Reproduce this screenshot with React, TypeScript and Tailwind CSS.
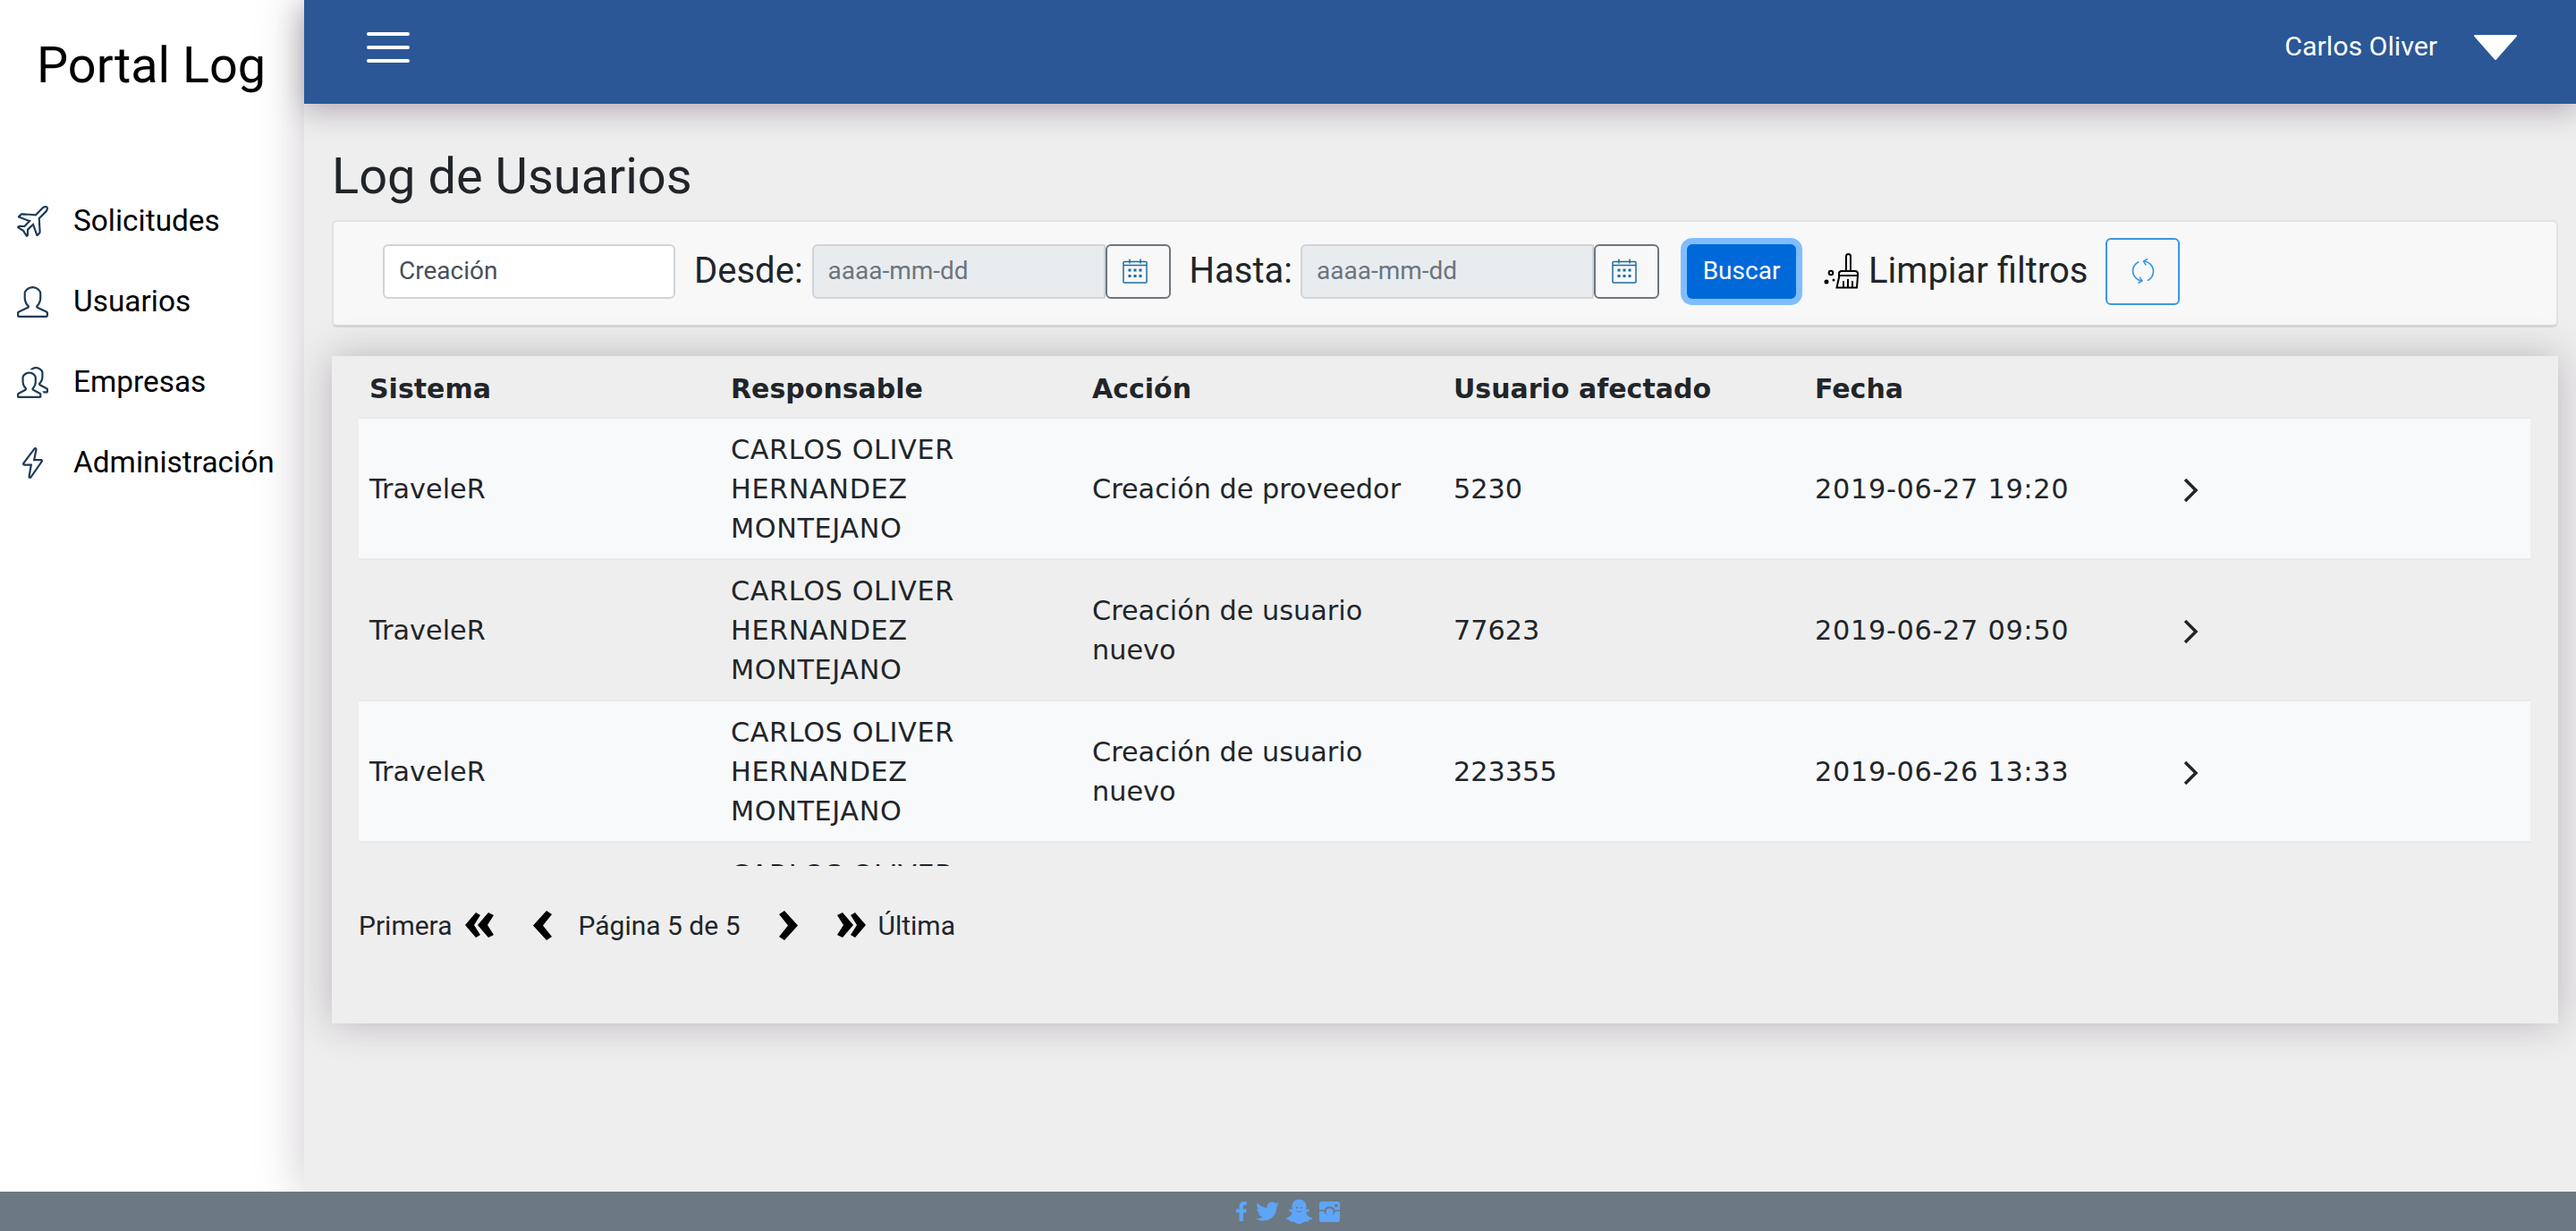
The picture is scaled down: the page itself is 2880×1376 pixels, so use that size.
import React from 'react';
import { SlPlane, SlUser, SlPeople, SlEnergy, SlRefresh } from 'react-icons/sl';
import { FaFacebookF, FaTwitter, FaSnapchatGhost } from 'react-icons/fa';

const navItems = [
  { label: 'Solicitudes', icon: SlPlane },
  { label: 'Usuarios', icon: SlUser },
  { label: 'Empresas', icon: SlPeople },
  { label: 'Administración', icon: SlEnergy },
];

const columns = ['Sistema', 'Responsable', 'Acción', 'Usuario afectado', 'Fecha', ''];

const rows = [
  { accion: 'Creación de proveedor', usuario: '5230', fecha: '2019-06-27 19:20' },
  { accion: 'Creación de usuario nuevo', usuario: '77623', fecha: '2019-06-27 09:50' },
  { accion: 'Creación de usuario nuevo', usuario: '223355', fecha: '2019-06-26 13:33' },
  { accion: 'Creación de usuario nuevo', usuario: '223355', fecha: '2019-06-26 13:30' },
];

function CalendarIcon() {
  return (
    <svg viewBox="0 0 28 28" className="h-[28px] w-[28px]" fill="none" stroke="#1a6d9f" strokeWidth="1.500">
      <rect x="1" y="3.500" width="26" height="23.500" rx="1" />
      <path d="M1 7.500h26M8 0.500v5M20 0.500v5" />
      <g fill="#1a6d9f" stroke="none">
        <rect x="6.500" y="11.500" width="3" height="3" />
        <rect x="12.500" y="11.500" width="3" height="3" />
        <rect x="18.500" y="11.500" width="3" height="3" />
        <rect x="6.500" y="18" width="3" height="3" />
        <rect x="12.500" y="18" width="3" height="3" />
        <rect x="18.500" y="18" width="3" height="3" />
      </g>
    </svg>
  );
}

function BroomIcon() {
  return (
    <svg viewBox="0 0 40 40" className="h-[40px] w-[40px]" fill="none" stroke="#000" strokeWidth="2">
      <path d="M25 20V3.500a2.500 2.500 0 0 1 5 0V20" />
      <path d="M20 20h15a3 3 0 0 1 3 3v2H17v-2a3 3 0 0 1 3-3z" />
      <path d="M17.500 25l-3 13.500H37l1-13.500M22 31v7.500M27 29v9.500M32 31v7.500" />
      <circle cx="8" cy="22" r="2.300" />
      <circle cx="3" cy="32" r="2.500" fill="#000" stroke="none" />
      <circle cx="11" cy="30" r="1.500" fill="#000" stroke="none" />
    </svg>
  );
}

function DateField() {
  return (
    <div className="flex">
      <div className="flex h-[61px] w-[328px] items-center rounded-l-[6px] rounded-r-[2px] border-2 border-[#ced4da] bg-[#e9ecef] pl-[16px] text-[28px] text-[#6c757d]">
        aaaa-mm-dd
      </div>
      <button className="flex h-[61px] w-[73px] items-center justify-center rounded-[6px] border-2 border-[#6c757d] pr-[6px]">
        <CalendarIcon />
      </button>
    </div>
  );
}

function Chevron({ flip = false }: { flip?: boolean }) {
  return (
    <svg viewBox="0 0 23 33" className={`h-[33px] w-[23px] ${flip ? 'rotate-180' : ''}`}>
      <path d="M16 0l6 4-10 12.500L22 29l-6 4L1 16.500z" fill="#000" />
    </svg>
  );
}

function DoubleChevron({ flip = false }: { flip?: boolean }) {
  return (
    <svg viewBox="0 0 33 28" className={`h-[28px] w-[33px] ${flip ? 'rotate-180' : ''}`} fill="#000">
      <path d="M12 0l5 3-7 11 7 11-5 3L0 14z" />
      <path d="M26 0l6 3-7 11 7 11-6 3L14 14z" />
    </svg>
  );
}

function Instagram() {
  return (
    <svg viewBox="0 0 24 24" className="ml-[8px] h-[23px] w-[23px]">
      <path
        fill="#5fa5f7"
        fillRule="evenodd"
        d="M3 0h18a3 3 0 0 1 3 3v18a3 3 0 0 1-3 3H3a3 3 0 0 1-3-3V3a3 3 0 0 1 3-3zM18 3v3.500h3.500V3zM0 10v1.500h5.300a7 7 0 0 0 13.400 0H24V10h-5.800a6.700 6.700 0 0 0-12.400 0zM12 8a4.300 4.300 0 1 0 0 8.600A4.300 4.300 0 0 0 12 8z"
      />
    </svg>
  );
}

export default function App() {
  return (
    <div className="flex h-screen flex-col overflow-hidden bg-[#eeeeee] font-['Roboto',sans-serif] text-[30px] text-[#212529]">
      <div className="flex min-h-0 flex-1">
        {/* sidebar */}
        <aside className="w-[340px] shrink-0 bg-white text-black">
          <div className="pt-[39px] pl-[41px] text-[55.8px] leading-[68px]">Portal Log</div>
          <nav className="mt-[115px] flex flex-col gap-[40px]">
            {navItems.map((item) => (
              <div key={item.label} className="flex h-[50px] items-center">
                <item.icon size={35} className="ml-[19px] text-[#1d3b58]" />
                <span className="ml-[28px] text-[33.4px]">{item.label}</span>
              </div>
            ))}
          </nav>
        </aside>

        <div className="relative flex min-w-0 flex-1 flex-col bg-[#eeeeee] shadow-[0_0_50px_rgba(70,50,70,0.28)]">
          {/* top bar */}
          <header className="relative z-10 flex h-[116px] shrink-0 items-center bg-[#2b5797] pb-[10px] pl-[70px] text-white shadow-[0_8px_30px_rgba(70,50,70,0.35)]">
            <div className="flex w-[48px] flex-col gap-[11px]">
              <span className="h-[4px] rounded-full bg-white" />
              <span className="h-[4px] rounded-full bg-white" />
              <span className="h-[4px] rounded-full bg-white" />
            </div>
            <span className="mb-[3px] ml-auto text-[30.3px]">Carlos Oliver</span>
            <svg viewBox="0 0 48 28" className="mr-[66px] ml-[41px] h-[28px] w-[48px]">
              <path d="M1 1h46L24 27z" fill="#fff" stroke="#fff" strokeWidth="2" strokeLinejoin="round" />
            </svg>
          </header>

          <main className="min-h-0 flex-1 pr-[20px] pl-[31px]">
            <h1 className="pt-[48px] text-[56px] leading-[66px]">Log de Usuarios</h1>

            {/* filtros */}
            <div className="mt-[16px] flex h-[120px] items-center rounded-[6px] border-2 border-b-[3px] border-[#e2e2e2] border-b-[#d8d8d8] bg-[#f8f8f8] pb-[5px] pl-[55px]">
              <div className="flex h-[61px] w-[327px] items-center rounded-[6px] border-2 border-[#ced4da] bg-white pl-[16px] text-[28px] text-[#495057]">
                Creación
              </div>
              <label className="mr-[10px] ml-[21px] text-[40px]">Desde:</label>
              <DateField />
              <label className="mr-[9px] ml-[21px] text-[40px]">Hasta:</label>
              <DateField />
              <button className="ml-[31px] flex h-[61px] w-[122px] items-center justify-center rounded-[6px] bg-[#0069d9] text-[28px] text-white shadow-[0_0_0_7px_#80bdff]">
                Buscar
              </button>
              <span className="ml-[31px]">
                <BroomIcon />
              </span>
              <span className="ml-[10px] text-[40px]">Limpiar filtros</span>
              <button className="ml-[20px] flex h-[75px] w-[83px] items-center justify-center rounded-[6px] border-2 border-[#3b97e0] text-[#3b97e0]">
                <SlRefresh size={28} />
              </button>
            </div>

            {/* tabla */}
            <section className="mt-[32px] h-[746px] pr-[31px] pl-[30px] shadow-[0_0_40px_rgba(70,50,70,0.3)]">
              <div className="h-[570px] overflow-hidden font-['DejaVu_Sans',sans-serif] text-[30.3px]">
                <table className="w-full table-fixed border-collapse">
                  <colgroup>
                    <col className="w-[404px]" />
                    <col className="w-[404px]" />
                    <col className="w-[404px]" />
                    <col className="w-[404px]" />
                    <col className="w-[404px]" />
                    <col />
                  </colgroup>
                  <thead>
                    <tr className="h-[69px]">
                      {columns.map((col, i) => (
                        <th key={i} className="px-[12px] pt-[4px] text-left text-[30px] font-bold">
                          {col}
                        </th>
                      ))}
                    </tr>
                  </thead>
                  <tbody>
                    {rows.map((row, i) => (
                      <tr
                        key={i}
                        className={`h-[158px] border-t-2 border-[#e8e9eb] ${i % 2 === 0 ? 'bg-[#f8f9fb]' : ''}`}
                      >
                        <td className="px-[12px] pt-[2px]">TraveleR</td>
                        <td className="px-[12px] pt-[2px] leading-[44px] tracking-[0.6px]">
                          CARLOS OLIVER HERNANDEZ MONTEJANO
                        </td>
                        <td className="px-[12px] pt-[2px] leading-[44px]">{row.accion}</td>
                        <td className="px-[12px] pt-[2px]">{row.usuario}</td>
                        <td className="px-[12px] pt-[2px] tracking-[0.7px] whitespace-nowrap">{row.fecha}</td>
                        <td className="pt-[4px] pl-[20px]">
                          <svg viewBox="0 0 18 28" className="h-[28px] w-[18px]">
                            <path d="M2 2l12 12L2 26" fill="none" stroke="#212529" strokeWidth="3.500" />
                          </svg>
                        </td>
                      </tr>
                    ))}
                  </tbody>
                </table>
              </div>

              {/* paginacion */}
              <div className="mt-[44px] flex h-[44px] items-center">
                <span>Primera</span>
                <span className="ml-[14px]">
                  <DoubleChevron />
                </span>
                <span className="ml-[42px]">
                  <Chevron />
                </span>
                <span className="ml-[29px]">Página 5 de 5</span>
                <span className="ml-[42px]">
                  <Chevron flip />
                </span>
                <span className="ml-[42px]">
                  <DoubleChevron flip />
                </span>
                <span className="ml-[14px]">Última</span>
              </div>
            </section>
          </main>
        </div>
      </div>

      {/* footer */}
      <footer className="relative z-20 flex h-[44px] shrink-0 items-center justify-center bg-[#6c7983] pr-[6px] text-[#5fa5f7]">
        <FaFacebookF size={22} />
        <FaTwitter size={26} className="ml-[5px]" />
        <span className="relative ml-[8px] flex">
          <FaSnapchatGhost size={29} />
          <span className="absolute top-[9px] left-[11px] h-[2px] w-[2px] rounded-full bg-[#6c7983]" />
          <span className="absolute top-[9px] left-[16px] h-[2px] w-[2px] rounded-full bg-[#6c7983]" />
          <span className="absolute top-[12px] left-[11px] h-[3px] w-[7px] rounded-b-full border-b border-[#6c7983]" />
        </span>
        <Instagram />
      </footer>
    </div>
  );
}
